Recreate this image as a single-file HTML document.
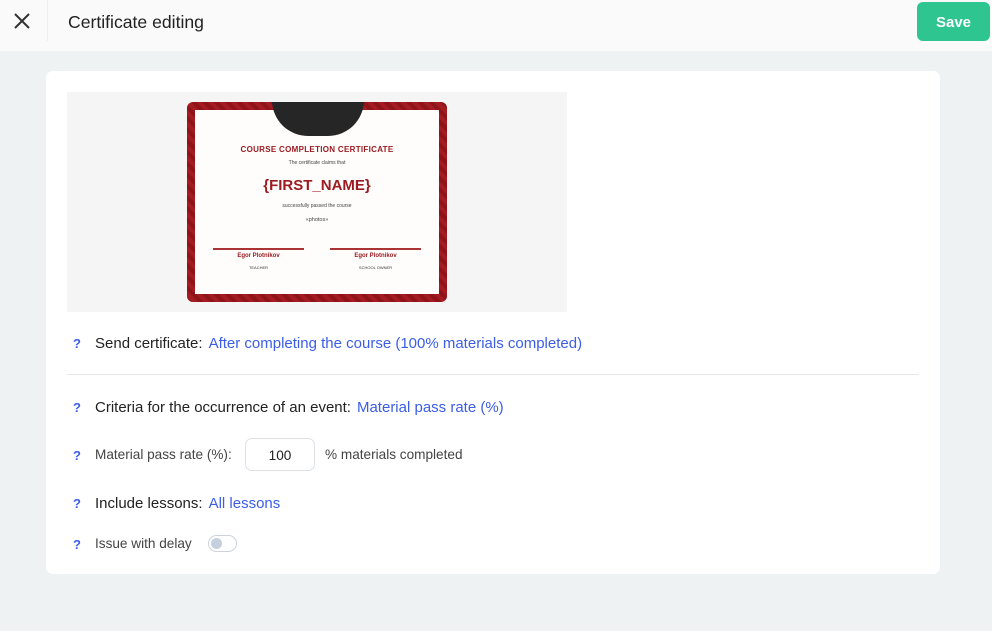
<!DOCTYPE html>
<html><head><style>
*{margin:0;padding:0;box-sizing:border-box}
body{width:992px;height:631px;background:#eff2f3;font-family:"Liberation Sans",sans-serif;position:relative;overflow:hidden;color:#222}
.top{position:absolute;left:0;top:0;width:992px;height:51px;background:#fafafb}
.sep{position:absolute;left:47px;top:0;width:1px;height:41px;background:#eee}
.title{position:absolute;left:68px;top:12px;font-size:17.6px;color:#222}
.save{position:absolute;left:917px;top:2px;width:73px;height:39px;background:#2fc591;border-radius:6px;color:#fff;font-weight:bold;font-size:15px;text-align:center;line-height:41px}
.card{position:absolute;left:46px;top:71px;width:894px;height:503px;background:#fff;border-radius:7px}
.prev{position:absolute;left:21px;top:21px;width:500px;height:220px;background:#f5f5f5}
.cert{position:absolute;left:120px;top:10px;width:260px;height:200px;border-radius:6px;background:repeating-linear-gradient(45deg,#8e1419 0 4px,#a41c22 4px 8px);overflow:hidden}
.inner{position:absolute;left:8px;top:8px;width:244px;height:184px;background:#fffdfb}
.arc{position:absolute;left:77px;top:-10px;width:92px;height:36px;background:#262626;border-radius:0 0 46px 46px}
.c{position:absolute;width:100%;text-align:center;left:0}
.q{position:absolute;left:27px;color:#3c5ee8;font-weight:bold;font-size:13px}
.row{position:absolute;left:49px;font-size:15px;color:#222}
.row a{color:#3b5de7;text-decoration:none;margin-left:6px}
.g{color:#444;font-size:13.6px}
</style></head><body>
<div class="top"><svg style="position:absolute;left:13px;top:12px" width="18" height="18"><path d="M2 2L16 16M16 2L2 16" stroke="#333" stroke-width="2"/></svg><div class="sep"></div><div class="title">Certificate editing</div><div class="save">Save</div></div>
<div class="card">
<div class="prev"><div class="cert"><div class="inner">
<div class="arc"></div>
<div class="c" style="top:35px;font-size:8px;font-weight:bold;color:#9c1b22;letter-spacing:.3px">COURSE COMPLETION CERTIFICATE</div>
<div class="c" style="top:50px;font-size:5px;color:#444">The certificate claims that</div>
<div class="c" style="top:67px;font-size:15px;color:#9c1b22;font-weight:bold">{FIRST_NAME}</div>
<div class="c" style="top:93px;font-size:5px;color:#444">successfully passed the course</div>
<div class="c" style="top:107px;font-size:5.5px;color:#444">«photos»</div>
<div style="position:absolute;left:18px;top:138px;width:91px;height:2px;background:#a33"></div>
<div style="position:absolute;left:135px;top:138px;width:91px;height:2px;background:#a33"></div>
<div style="position:absolute;left:18px;top:143px;width:91px;text-align:center;font-size:6px;font-weight:bold;color:#9c1b22">Egor Plotnikov</div>
<div style="position:absolute;left:135px;top:143px;width:91px;text-align:center;font-size:6px;font-weight:bold;color:#9c1b22">Egor Plotnikov</div>
<div style="position:absolute;left:18px;top:155px;width:91px;text-align:center;font-size:4px;color:#333">TEACHER</div>
<div style="position:absolute;left:135px;top:155px;width:91px;text-align:center;font-size:4px;color:#333">SCHOOL OWNER</div>
</div></div></div>
<div class="q" style="top:265px">?</div><div class="row" style="top:264px">Send certificate:<a>After completing the course (100% materials completed)</a></div>
<div style="position:absolute;left:21px;top:303px;width:852px;height:1px;background:#e8e8e8"></div>
<div class="q" style="top:329px">?</div><div class="row" style="top:328px">Criteria for the occurrence of an event:<a>Material pass rate (%)</a></div>
<div class="q" style="top:377px">?</div><div class="row g" style="top:376px">Material pass rate (%):</div>
<div style="position:absolute;left:199px;top:367px;width:70px;height:33px;border:1px solid #dde1e6;border-radius:7px;text-align:center;line-height:33px;font-size:13.6px">100</div>
<div class="row g" style="top:376px;left:279px">% materials completed</div>
<div class="q" style="top:425px">?</div><div class="row" style="top:424px">Include lessons:<a>All lessons</a></div>
<div class="q" style="top:466px">?</div><div class="row g" style="top:465px">Issue with delay</div>
<div style="position:absolute;left:162px;top:464px;width:29px;height:17px;border:1px solid #ccd3de;border-radius:9px"><div style="position:absolute;left:2px;top:2px;width:11px;height:11px;border-radius:50%;background:#c5cfdd"></div></div>
</div>
</body></html>
